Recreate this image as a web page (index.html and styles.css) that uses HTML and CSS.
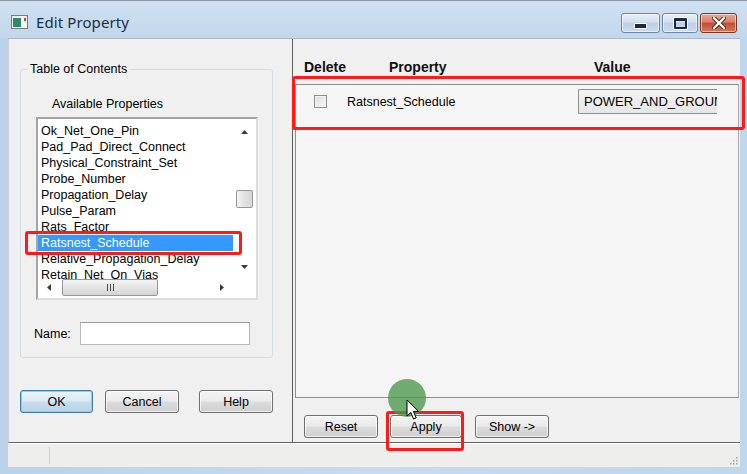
FILE: index.html
```html
<!DOCTYPE html>
<html>
<head>
<meta charset="utf-8">
<link rel="stylesheet" href="styles.css">
</head>
<body>
<div class="window">
  <div class="titlebar">
    <svg class="app-icon" width="17" height="14" viewBox="0 0 17 14">
      <rect x="0.5" y="0.5" width="16" height="13" fill="#f4f4f4" stroke="#7a7a7a"/>
      <rect x="2" y="3" width="8" height="9" fill="#2f8a6a"/>
      <rect x="11" y="3" width="4" height="9" fill="#ffffff"/>
      <rect x="13" y="3" width="2" height="3" fill="#d23a2a"/>
    </svg>
    <span class="title">Edit Property</span>
    <div class="controls">
      <span class="ctl ctl-min"><span class="min-glyph"></span></span>
      <span class="ctl ctl-max"><span class="max-glyph"></span></span>
      <span class="ctl ctl-close">
        <svg width="14" height="12" viewBox="0 0 14 12">
          <path d="M2 1 L12 11 M12 1 L2 11" stroke="#5a2418" stroke-width="4.2" stroke-linecap="round"/>
          <path d="M2 1 L12 11 M12 1 L2 11" stroke="#ffffff" stroke-width="2.4" stroke-linecap="round"/>
        </svg>
      </span>
    </div>
  </div>

  <div class="client">
    <div class="panes">
      <div class="left-pane">
        <fieldset class="toc">
          <legend>Table of Contents</legend>
          <div class="caption">Available Properties</div>
          <div class="listbox">
            <div class="list-main">
              <div class="list-items">
                <div class="item">Ok_Net_One_Pin</div>
                <div class="item">Pad_Pad_Direct_Connect</div>
                <div class="item">Physical_Constraint_Set</div>
                <div class="item">Probe_Number</div>
                <div class="item">Propagation_Delay</div>
                <div class="item">Pulse_Param</div>
                <div class="item">Rats_Factor</div>
                <div class="item item-selected">Ratsnest_Schedule</div>
                <div class="item">Relative_Propagation_Delay</div>
                <div class="item">Retain_Net_On_Vias</div>
              </div>
              <div class="vscroll">
                <div class="arrow-cell up-cell">
                  <svg width="7" height="4" viewBox="0 0 7 4"><path d="M0 4 L3.5 0 L7 4 Z" fill="#3a3a3a"/></svg>
                </div>
                <div class="vthumb"></div>
                <div class="spacer"></div>
                <div class="arrow-cell down-cell">
                  <svg width="7" height="4" viewBox="0 0 7 4"><path d="M0 0 L3.5 4 L7 0 Z" fill="#3a3a3a"/></svg>
                </div>
              </div>
            </div>
            <div class="hscroll-row">
              <div class="hscroll">
                <div class="harrow-cell">
                  <svg width="4" height="7" viewBox="0 0 4 7"><path d="M4 0 L0 3.5 L4 7 Z" fill="#3a3a3a"/></svg>
                </div>
                <div class="hthumb"><span class="grip-line"></span><span class="grip-line"></span><span class="grip-line"></span></div>
                <div class="spacer"></div>
                <div class="harrow-cell">
                  <svg width="4" height="7" viewBox="0 0 4 7"><path d="M0 0 L4 3.5 L0 7 Z" fill="#3a3a3a"/></svg>
                </div>
              </div>
              <div class="corner"></div>
            </div>
          </div>
          <div class="name-row">
            <span class="name-label">Name:</span>
            <span class="name-input"></span>
          </div>
        </fieldset>
        <div class="dialog-buttons">
          <span class="btn btn-ok">OK</span>
          <span class="btn btn-cancel">Cancel</span>
          <span class="btn btn-help">Help</span>
        </div>
      </div>

      <div class="right-pane">
        <div class="grid-header">
          <span>Delete</span>
          <span>Property</span>
          <span>Value</span>
        </div>
        <div class="grid-box">
          <div class="grid-row">
            <span class="checkbox"></span>
            <span class="prop-name">Ratsnest_Schedule</span>
            <span class="value-field">POWER_AND_GROUND</span>
          </div>
        </div>
        <div class="pane-buttons">
          <span class="btn btn-reset">Reset</span>
          <span class="btn btn-apply">Apply</span>
          <span class="btn btn-show">Show -&gt;</span>
        </div>
      </div>
    </div>
    <div class="statusbar">
      <div class="status-cell"></div>
      <div class="status-main"></div>
      <svg class="size-grip" width="10" height="10" viewBox="0 0 10 10">
        <rect x="8" y="2" width="1.5" height="1.5" fill="#a0a0a0"/>
        <rect x="5" y="5" width="1.5" height="1.5" fill="#a0a0a0"/>
        <rect x="8" y="5" width="1.5" height="1.5" fill="#a0a0a0"/>
        <rect x="2" y="8" width="1.5" height="1.5" fill="#a0a0a0"/>
        <rect x="5" y="8" width="1.5" height="1.5" fill="#a0a0a0"/>
        <rect x="8" y="8" width="1.5" height="1.5" fill="#a0a0a0"/>
      </svg>
    </div>
  </div>

  <div class="mark mark-row"></div>
  <div class="mark mark-item"></div>
  <div class="mark mark-apply"></div>
  <div class="click-dot"></div>
  <svg class="cursor" width="14" height="22" viewBox="0 0 14 22">
    <path d="M1 1 L1 17 L4.8 13.4 L7.6 20 L10.2 18.9 L7.4 12.4 L12.5 12.4 Z" fill="#ffffff" stroke="#000000" stroke-width="1" stroke-linejoin="round"/>
  </svg>
</div>
</body>
</html>
```

FILE: styles.css
```css
html, body {
  margin: 0;
  padding: 0;
}

body {
  width: 747px;
  height: 474px;
  overflow: hidden;
  font-family: "Liberation Sans", Arial, sans-serif;
  font-size: 12.5px;
  color: #000;
}

.window {
  position: relative;
  width: 747px;
  height: 474px;
  display: flex;
  flex-direction: column;
  background: linear-gradient(90deg, #bad2ea 0%, #c8dbef 50%, #c0d6ec 100%);
  border-top: 1px solid #8a98a8;
  box-sizing: border-box;
}

/* ---------- title bar ---------- */
.titlebar {
  height: 37px;
  display: flex;
  align-items: center;
  padding: 4px 0 0 11px;
  box-sizing: border-box;
  background: linear-gradient(#cfe0f2, #c2d7ec);
}

.app-icon {
  flex: none;
}

.title {
  margin-left: 8px;
  font-family: "Noto Sans", "Open Sans", sans-serif;
  font-size: 15px;
  color: #1b2d45;
  letter-spacing: 0.1px;
}

.controls {
  margin-left: auto;
  margin-right: 10px;
  align-self: flex-start;
  margin-top: 8px;
  display: flex;
  gap: 2px;
}

.ctl {
  height: 20px;
  box-sizing: border-box;
  border: 1px solid #6c86a6;
  border-radius: 3px;
  display: flex;
  align-items: center;
  justify-content: center;
  box-shadow: inset 0 0 0 1px rgba(255, 255, 255, 0.55);
}

.ctl-min,
.ctl-max {
  background: linear-gradient(#e8eff8 0%, #d3e0ef 45%, #bccfe5 50%, #cadcf0 100%);
}

.ctl-min { width: 39px; }
.ctl-max { width: 36px; }

.ctl-close {
  width: 37px;
  border-color: #7d3224;
  background: linear-gradient(#e9a99a 0%, #d87f68 45%, #c44f31 50%, #d5775a 100%);
}

.min-glyph {
  width: 11px;
  height: 4px;
  margin-top: 5px;
  background: #1e2a3a;
  border: 1px solid #ffffff;
  border-radius: 1px;
}

.max-glyph {
  width: 9px;
  height: 6px;
  border: 2px solid #1e2a3a;
  border-top-width: 3px;
  box-shadow: 0 0 0 1px #ffffff;
  border-radius: 1px;
}

/* ---------- client ---------- */
.client {
  flex: 1;
  margin: 0 7px 7px 8px;
  display: flex;
  flex-direction: column;
  background: #f0f0f0;
  border-top: 1px solid #a9b7c6;
}

.panes {
  height: 404px;
  display: flex;
  border-bottom: 1px solid #646464;
  border-left: 1px solid #d0d0d0;
  box-sizing: border-box;
}

.left-pane {
  width: 284px;
  flex: none;
  box-sizing: border-box;
  border-right: 1px solid #5e5e5e;
  padding: 23px 0 0 11px;
}

.toc {
  margin: 0;
  padding: 0;
  width: 253px;
  height: 296px;
  box-sizing: border-box;
  border: 1px solid #d5dde4;
  border-radius: 3px;
  min-inline-size: 0;
}

.toc legend {
  margin-left: 7px;
  padding: 0 2px;
  line-height: 15px;
  font-size: 12.5px;
}

.caption {
  margin: 20px 0 0 31px;
  line-height: 15px;
}

.listbox {
  margin: 5px 0 0 15px;
  width: 222px;
  height: 183px;
  box-sizing: border-box;
  border: 2px solid;
  border-color: #a5a5a5 #dcdcdc #dcdcdc #a5a5a5;
  background: #ffffff;
  display: flex;
  flex-direction: column;
}

.list-main {
  height: 160px;
  display: flex;
}

.list-items {
  flex: 1;
  padding-top: 4px;
  overflow: hidden;
}

.item {
  height: 16px;
  line-height: 16px;
  padding-left: 3px;
  margin-right: 2px;
  white-space: nowrap;
}

.item-selected {
  background: #3399ff;
  color: #ffffff;
}

.vscroll {
  width: 18px;
  margin-right: 3px;
  display: flex;
  flex-direction: column;
  align-items: center;
}

.arrow-cell {
  width: 18px;
  display: flex;
  align-items: center;
  justify-content: center;
}

.up-cell { height: 26px; }
.down-cell { height: 24px; }

.vthumb {
  margin-top: 45px;
  width: 17px;
  height: 18px;
  box-sizing: border-box;
  border: 1px solid #979797;
  border-radius: 2px;
  background: linear-gradient(90deg, #f4f4f4, #e2e2e2 50%, #d6d6d6);
}

.spacer {
  flex: 1;
}

.hscroll-row {
  height: 17px;
  display: flex;
}

.hscroll {
  width: 195px;
  display: flex;
  align-items: center;
}

.harrow-cell {
  width: 22px;
  height: 17px;
  display: flex;
  align-items: center;
  justify-content: center;
}

.hthumb {
  margin-left: 2px;
  width: 96px;
  height: 17px;
  box-sizing: border-box;
  border: 1px solid #979797;
  border-radius: 2px;
  background: linear-gradient(#f4f4f4, #e4e4e4 50%, #d4d4d4);
  display: flex;
  align-items: center;
  justify-content: center;
  gap: 2px;
}

.grip-line {
  width: 1px;
  height: 7px;
  background: #4a4a4a;
}

.corner {
  flex: 1;
}

.name-row {
  margin-top: 22px;
  display: flex;
  align-items: center;
}

.name-label {
  margin-left: 13px;
  width: 46px;
}

.name-input {
  width: 170px;
  height: 23px;
  box-sizing: border-box;
  border: 1px solid #b8b8b8;
  border-top-color: #9c9c9c;
  background: #ffffff;
}

.dialog-buttons {
  margin-top: 32px;
  display: flex;
}

.btn {
  height: 23px;
  box-sizing: border-box;
  border: 1px solid #707070;
  border-radius: 3px;
  background: linear-gradient(#f3f3f3 0%, #ebebeb 48%, #dcdcdc 52%, #cfcfcf 100%);
  box-shadow: inset 0 0 0 1px rgba(255, 255, 255, 0.7);
  display: flex;
  align-items: center;
  justify-content: center;
  font-size: 12.5px;
  color: #000;
}

.btn-ok {
  width: 73px;
  border-color: #3c7fb1;
  background: linear-gradient(#eaf4fb 0%, #dbe9f4 48%, #c9dced 52%, #bcd3e8 100%);
  box-shadow: inset 0 0 0 1px #7fd0f5;
}

.btn-cancel {
  width: 74px;
  margin-left: 12px;
}

.btn-help {
  width: 74px;
  margin-left: 20px;
}

/* ---------- right pane ---------- */
.right-pane {
  flex: 1;
  padding: 20px 1px 0 2px;
  display: flex;
  flex-direction: column;
}

.grid-header {
  display: grid;
  grid-template-columns: 85px 205px auto;
  padding-left: 9px;
  font-size: 14px;
  font-weight: bold;
  line-height: 17px;
  color: #111;
}

.grid-box {
  margin-top: 8px;
  height: 314px;
  box-sizing: border-box;
  border: 1px solid #8e8e8e;
  border-right-color: #a8a8a8;
  background: #f5f5f5;
}

.grid-row {
  height: 33px;
  display: flex;
  align-items: center;
}

.checkbox {
  margin-left: 18px;
  width: 13px;
  height: 13px;
  box-sizing: border-box;
  border: 1px solid #8f8f8f;
  background: linear-gradient(135deg, #dcdcdc, #f8f8f8);
  box-shadow: inset 0 0 0 1px #f2f2f2;
}

.prop-name {
  margin-left: 20px;
}

.value-field {
  margin-left: auto;
  margin-right: 21px;
  width: 139px;
  height: 25px;
  box-sizing: border-box;
  border: 1px solid #8e8f8f;
  border-right: none;
  border-radius: 2px 0 0 2px;
  background: linear-gradient(#f4f4f4, #e6e6e6);
  padding-left: 5px;
  line-height: 23px;
  font-size: 13px;
  white-space: nowrap;
  overflow: hidden;
}

.pane-buttons {
  margin-top: 17px;
  padding-left: 9px;
  display: flex;
}

.btn-reset { width: 74px; }
.btn-apply { width: 72px; margin-left: 12px; }
.btn-show { width: 74px; margin-left: 13px; }

/* ---------- status bar ---------- */
.statusbar {
  flex: 1;
  display: flex;
  align-items: stretch;
  background: #eeeeec;
  border-top: 1px solid #ffffff;
  position: relative;
}

.status-cell {
  width: 41px;
  margin: 3px 0;
  border-right: 1px solid #cfcfcf;
}

.status-main {
  flex: 1;
}

.size-grip {
  align-self: flex-end;
  margin: 0 2px 2px 0;
}

/* ---------- annotations (overlays) ---------- */
.mark {
  position: absolute;
  box-sizing: border-box;
  border: 3px solid #ff1a1a;
  border-radius: 3px;
}

.mark-row {
  left: 292px;
  top: 75px;
  width: 453px;
  height: 54px;
}

.mark-item {
  left: 25px;
  top: 230px;
  width: 217px;
  height: 24px;
}

.mark-apply {
  left: 386px;
  top: 410px;
  width: 78px;
  height: 40px;
}

.click-dot {
  position: absolute;
  left: 388px;
  top: 378px;
  width: 38px;
  height: 38px;
  border-radius: 50%;
  background: rgba(74, 150, 74, 0.78);
}

.cursor {
  position: absolute;
  left: 406px;
  top: 398px;
}
```
